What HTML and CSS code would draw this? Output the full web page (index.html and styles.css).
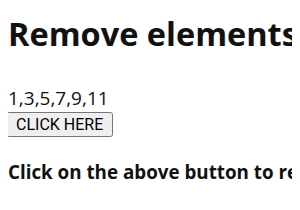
FILE: index.html
```html
<!DOCTYPE html>
<html lang="en">
<head>
  <meta charset="UTF-8" />
  <title>Remove elements</title>
  <link rel="stylesheet" href="styles.css">
</head>
<body>
  <h1 class="heading">Remove elements from an array</h1>
  <p id="list">1,3,5,7,9,11</p>
  <button class="btn">CLICK HERE</button>
  <p class="note">Click on the above button to remove the even elements</p>
</body>
</html>
```

FILE: styles.css
```css
body {
  margin: 8px;
  font-family: "Open Sans", sans-serif;
  color: #111;
  white-space: nowrap;
  overflow: hidden;
}

.heading {
  font-size: 32.5px;
  line-height: 40px;
  margin: 6px 0 33px;
}

#list {
  font-size: 19px;
  line-height: 22px;
  margin: 0 0 3px;
}

.btn {
  font-family: Roboto, "Liberation Sans", sans-serif;
  font-size: 16px;
  padding: 1px 8px;
  margin: 0 0 0 -2px;
}

.note {
  font-size: 18.8px;
  font-weight: bold;
  margin: 22px 0 0;
}
```
